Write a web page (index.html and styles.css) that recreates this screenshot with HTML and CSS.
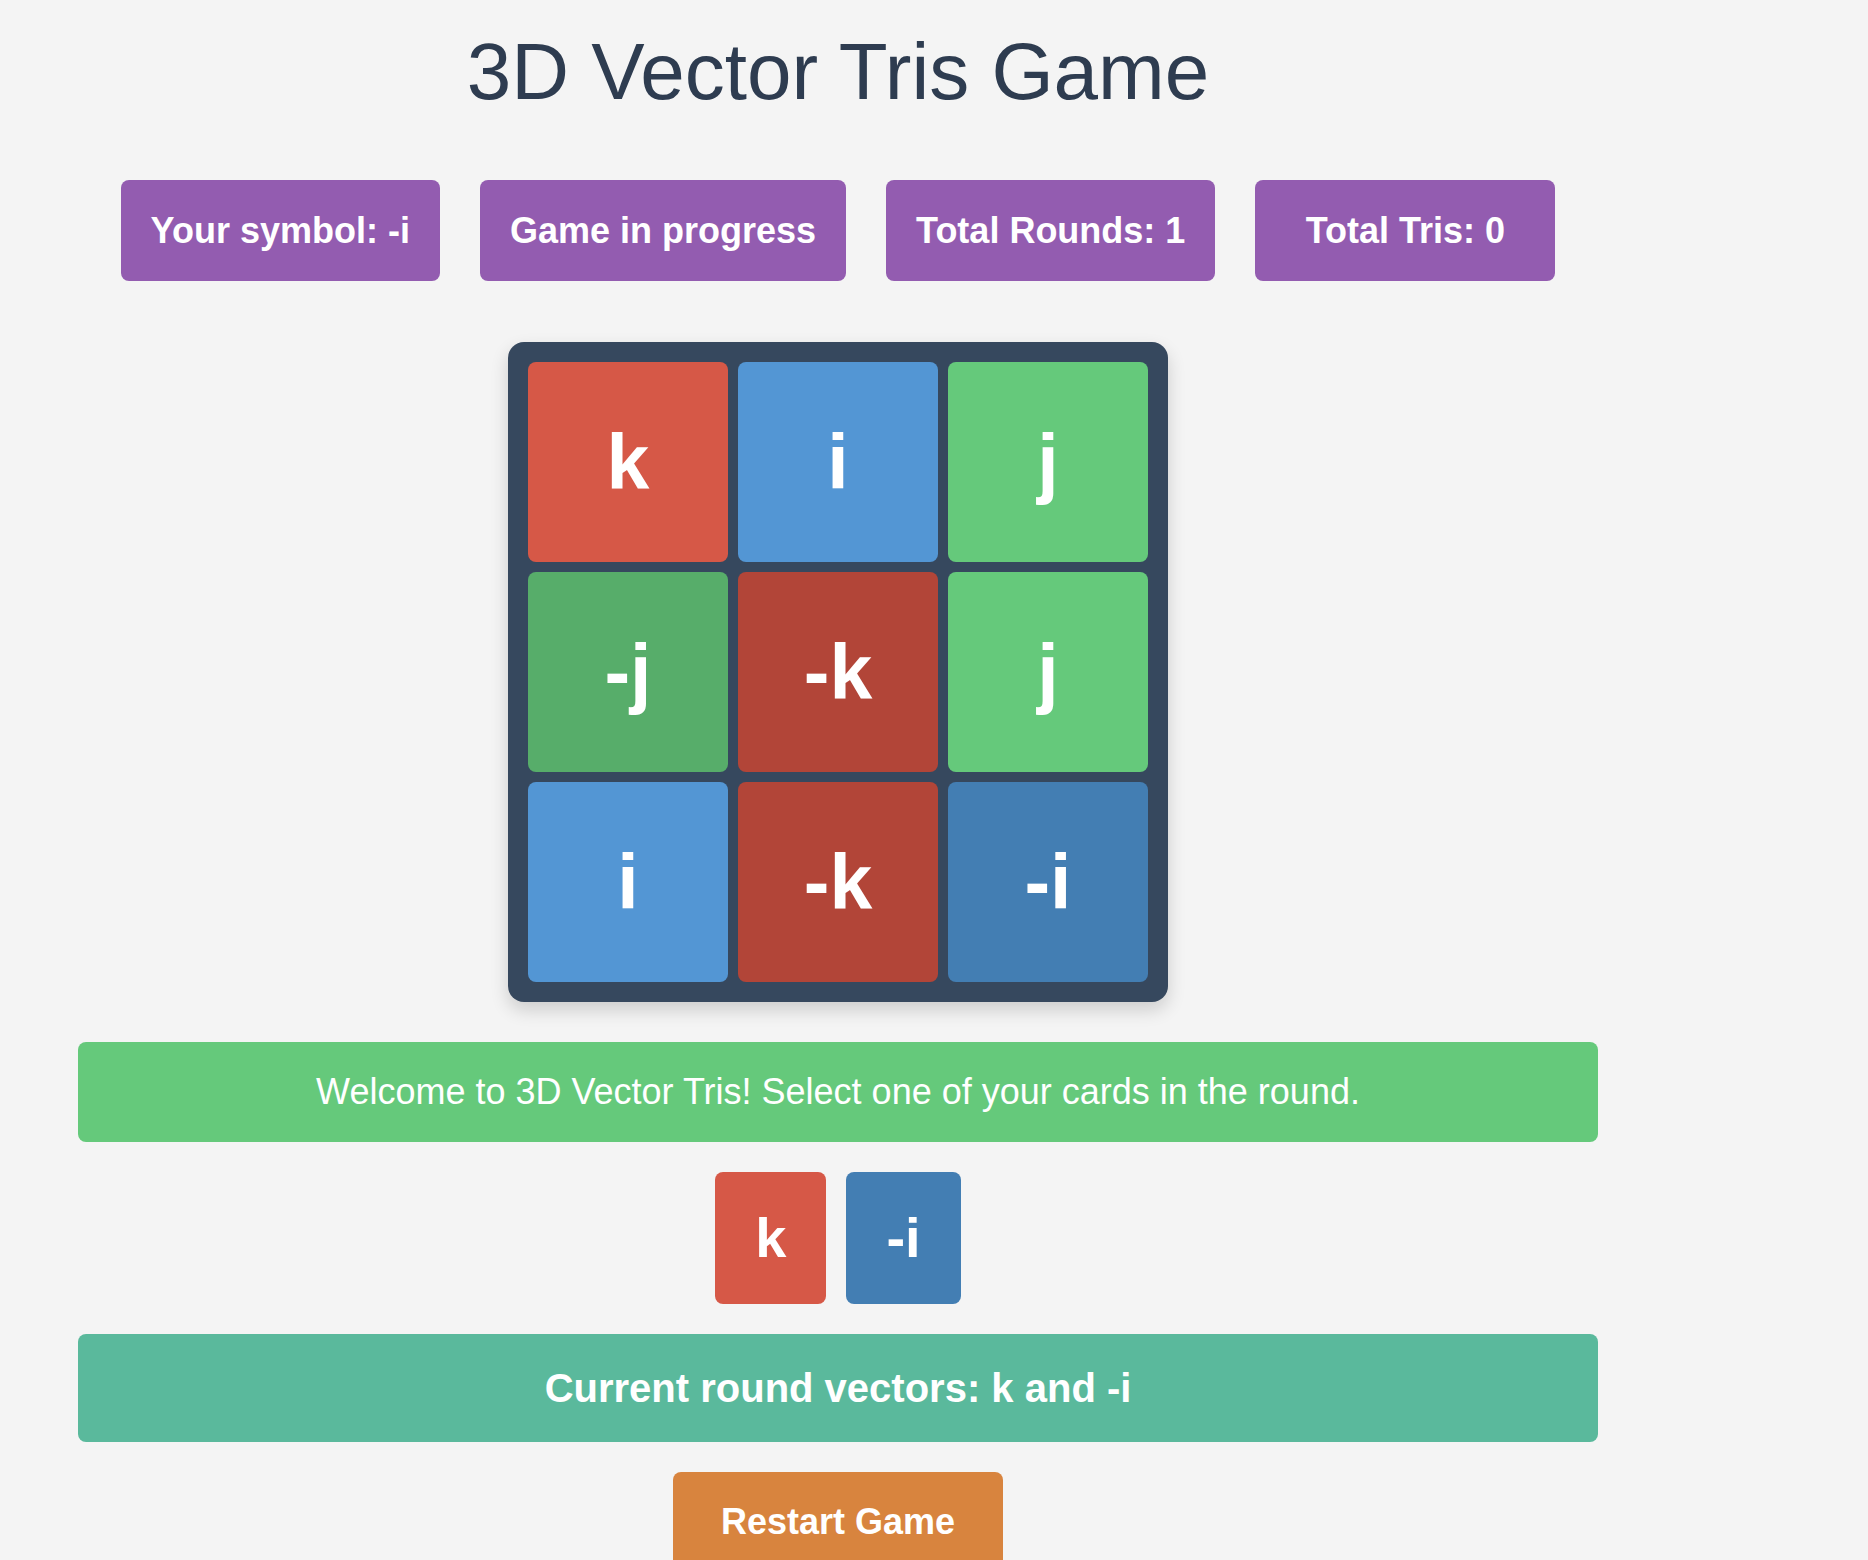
FILE: index.html
```html
<!DOCTYPE html>
<html lang="en">
<head>
<meta charset="utf-8">
<title>3D Vector Tris Game</title>
<link rel="stylesheet" href="styles.css">
</head>
<body>
<div class="container">
  <h1 class="title">3D Vector Tris Game</h1>
  <div class="status-row">
    <div class="status">Your symbol: -i</div>
    <div class="status">Game in progress</div>
    <div class="status">Total Rounds: 1</div>
    <div class="status">Total Tris: 0</div>
  </div>
  <div class="board">
    <div class="cell red">k</div>
    <div class="cell blue">i</div>
    <div class="cell green">j</div>
    <div class="cell dark-green">-j</div>
    <div class="cell dark-red">-k</div>
    <div class="cell green">j</div>
    <div class="cell blue">i</div>
    <div class="cell dark-red">-k</div>
    <div class="cell dark-blue">-i</div>
  </div>
  <div class="message">Welcome to 3D Vector Tris! Select one of your cards in the round.</div>
  <div class="hand">
    <div class="card red">k</div>
    <div class="card dark-blue">-i</div>
  </div>
  <div class="round-info">Current round vectors: k and -i</div>
  <button class="restart">Restart Game</button>
</div>
</body>
</html>
```

FILE: styles.css
```css
html, body {
  margin: 0;
  padding: 0;
}

body {
  background: #f4f4f4;
  font-family: "Liberation Sans", Arial, Helvetica, sans-serif;
  overflow: hidden;
}

.container {
  width: 1520px;
  margin-left: 78px;
  display: flex;
  flex-direction: column;
  align-items: center;
}

.title {
  margin: 26px 0 0;
  font-size: 80px;
  font-weight: normal;
  line-height: 92px;
  color: #2e3c50;
}

.status-row {
  margin-top: 62px;
  display: flex;
  gap: 40px;
}

.status {
  box-sizing: border-box;
  min-width: 300px;
  text-align: center;
  background: #935cb0;
  color: #fff;
  font-size: 36px;
  font-weight: bold;
  line-height: 41px;
  padding: 30px;
  border-radius: 8px;
}

.board {
  margin-top: 61px;
  padding: 20px;
  background: #36485e;
  border-radius: 16px;
  display: grid;
  grid-template-columns: repeat(3, 200px);
  grid-template-rows: repeat(3, 200px);
  gap: 10px;
  box-shadow: 0 8px 18px rgba(0, 0, 0, 0.16);
}

.cell {
  border-radius: 8px;
  display: flex;
  align-items: center;
  justify-content: center;
  color: #fff;
  font-size: 77px;
  font-weight: bold;
}

.red { background: #d65847; }
.blue { background: #5396d4; }
.green { background: #65c97b; }
.dark-green { background: #57ad6a; }
.dark-red { background: #b24538; }
.dark-blue { background: #437eb3; }

.message {
  margin-top: 40px;
  width: 100%;
  box-sizing: border-box;
  background: #65c97b;
  color: #fff;
  text-align: center;
  font-size: 36px;
  line-height: 40px;
  padding: 30px;
  border-radius: 8px;
}

.hand {
  margin-top: 30px;
  display: flex;
  gap: 20px;
}

.card {
  color: #fff;
  font-size: 56px;
  font-weight: bold;
  line-height: 64px;
  padding: 34px 40px;
  border-radius: 8px;
}

.round-info {
  margin-top: 30px;
  width: 100%;
  box-sizing: border-box;
  background: #5ab99c;
  color: #fff;
  text-align: center;
  font-size: 40px;
  font-weight: bold;
  line-height: 46px;
  padding: 31px;
  border-radius: 8px;
}

.restart {
  margin-top: 30px;
  background: #d8843e;
  color: #fff;
  border: none;
  font-family: inherit;
  font-size: 36px;
  font-weight: bold;
  line-height: 40px;
  padding: 30px 48px;
  border-radius: 8px;
}
```
